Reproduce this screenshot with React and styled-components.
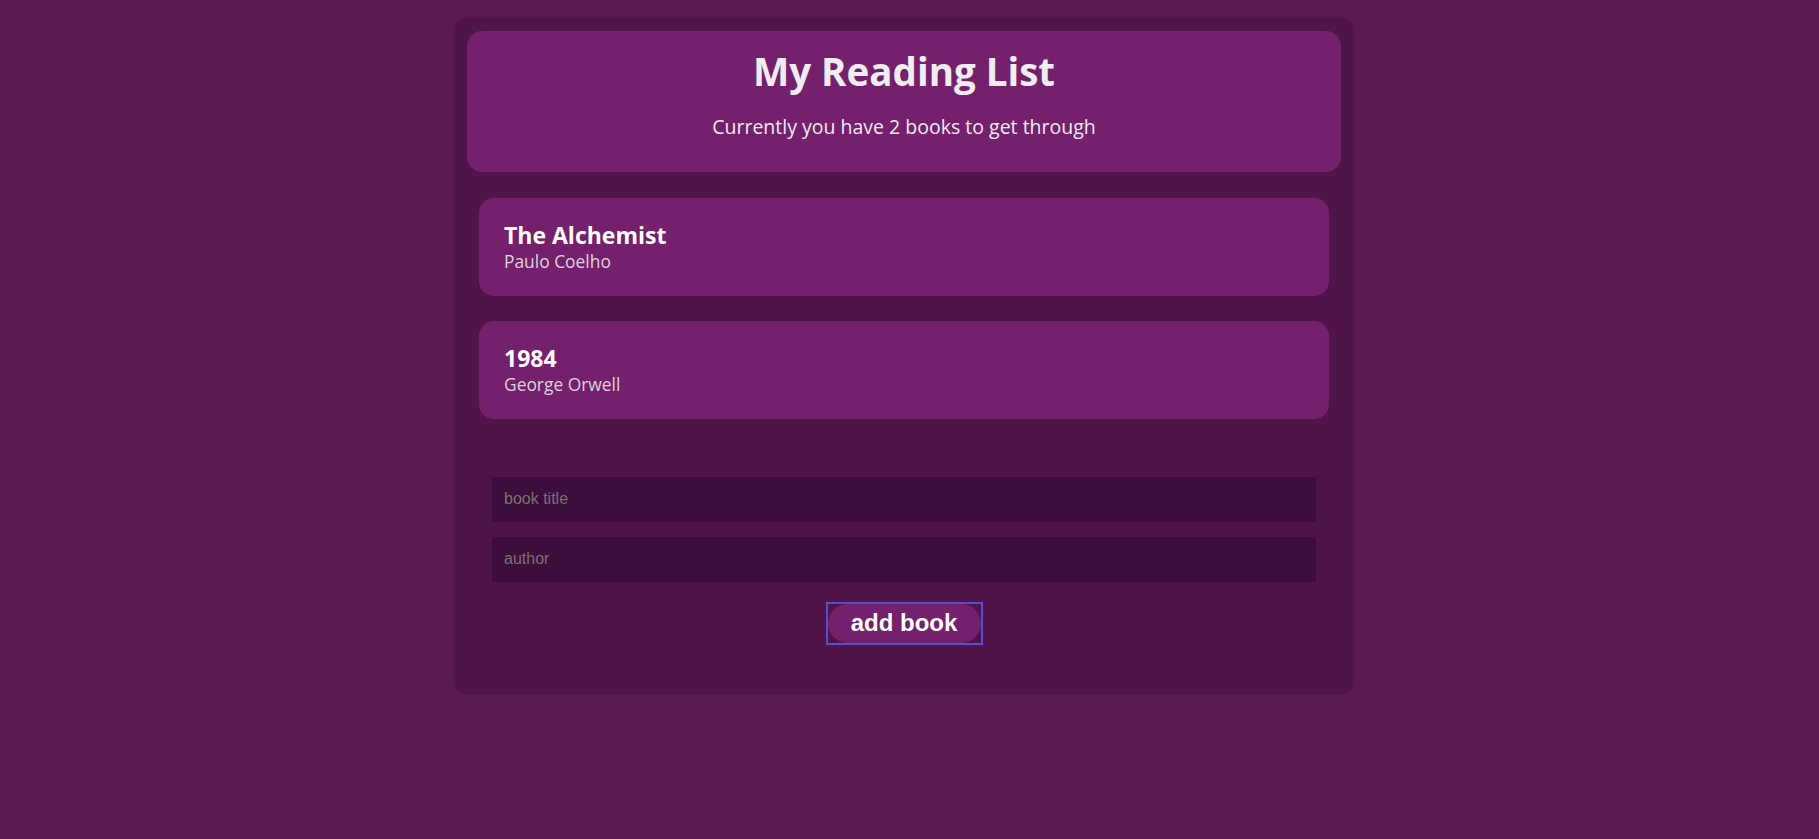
import React from "react";
import styled, { createGlobalStyle } from "styled-components";

const GlobalStyle = createGlobalStyle`
  html, body {
    margin: 0;
    padding: 0;
    background: #5a1953;
    font-family: "Open Sans", "Noto Sans", sans-serif;
  }
  * { box-sizing: border-box; }
`;

const Page = styled.div`
  padding: 18px 11px 0 0;
  min-height: 839px;
`;

const Panel = styled.div`
  width: 900px;
  margin: 0 auto;
  background: #4f1548;
  border-radius: 12px;
  padding: 13px 13px 50px;
`;

const Header = styled.header`
  background: #74206c;
  border-radius: 15px;
  text-align: center;
  padding: 17px 20px 33px;
`;

const Title = styled.h1`
  margin: 0;
  font-size: 38.5px;
  line-height: 46px;
  font-weight: 700;
  color: #f0edf0;
`;

const Subtitle = styled.p`
  margin: 20px 0 0;
  font-size: 19.5px;
  line-height: 25px;
  color: #f0edf0;
`;

const BookList = styled.ul`
  list-style: none;
  margin: 25.6px 0 0;
  padding: 0 12px;
  display: flex;
  flex-direction: column;
  gap: 25px;
`;

const BookCard = styled.li`
  background: #74206c;
  border-radius: 15px;
  padding: 23px 25px 24.4px;
`;

const BookTitle = styled.div`
  font-size: 23px;
  line-height: 29px;
  font-weight: 700;
  color: #ffffff;
`;

const BookAuthor = styled.div`
  font-size: 17.4px;
  line-height: 22px;
  color: #ddd3dc;
`;

const Form = styled.form`
  margin-top: 57.7px;
  padding: 0 25px;
  display: flex;
  flex-direction: column;
  align-items: center;
  gap: 15.3px;
`;

const Input = styled.input`
  width: 100%;
  height: 44.7px;
  border: none;
  outline: none;
  background: #3d0d3b;
  padding: 0 12px;
  font-family: "Liberation Sans", Arial, sans-serif;
  font-size: 16px;
  color: #eee;
  &::placeholder {
    color: #7b7270;
  }
`;

const ButtonFrame = styled.div`
  margin-top: 4.7px;
  border: 2px solid #5b4bd4;
  background: #4d1446;
  display: flex;
`;

const AddButton = styled.button`
  width: 153px;
  height: 39px;
  border: none;
  border-radius: 20px;
  background: #74206c;
  color: #ffffff;
  font-family: "Liberation Sans", Arial, sans-serif;
  font-weight: 700;
  font-size: 24px;
  padding: 0;
  cursor: pointer;
`;

const books = [
  { title: "The Alchemist", author: "Paulo Coelho" },
  { title: "1984", author: "George Orwell" },
];

export default function App() {
  return (
    <Page>
      <GlobalStyle />
      <Panel>
        <Header>
          <Title>My Reading List</Title>
          <Subtitle>Currently you have {books.length} books to get through</Subtitle>
        </Header>
        <BookList>
          {books.map((b) => (
            <BookCard key={b.title}>
              <BookTitle>{b.title}</BookTitle>
              <BookAuthor>{b.author}</BookAuthor>
            </BookCard>
          ))}
        </BookList>
        <Form onSubmit={(e) => e.preventDefault()}>
          <Input placeholder="book title" />
          <Input placeholder="author" />
          <ButtonFrame>
            <AddButton type="submit">add book</AddButton>
          </ButtonFrame>
        </Form>
      </Panel>
    </Page>
  );
}
